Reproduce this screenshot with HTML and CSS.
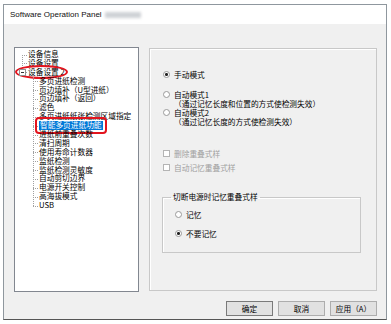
FILE: index.html
```html
<!DOCTYPE html>
<html lang="zh-CN">
<head>
  <meta charset="UTF-8">
  <title>Software Operation Panel</title>
  <link rel="stylesheet" href="styles.css">
</head>
<body>
  <div class="window">
    <div class="titlebar">
      <span class="title">Software Operation Panel</span>
      <span class="model"></span>
    </div>

    <div class="content">
      <div class="main">
        <!-- Settings tree -->
        <div class="tree">
          <div class="root">
            <div class="node">设备信息</div>
            <div class="node">设备设置</div>
            <div class="node"><span class="toggle"></span>设备设置 2<span class="mark ellipse"></span></div>
          </div>
          <div class="children">
            <div class="node">多页进纸检测</div>
            <div class="node">页边填补（U型进纸）</div>
            <div class="node">页边填补（返回）</div>
            <div class="node">滤色</div>
            <div class="node">多页进纸纸张检测区域指定</div>
            <div class="node"><span class="selected">智能多页进纸功能</span><span class="mark box"></span></div>
            <div class="node">进纸前重叠次数</div>
            <div class="node">清扫周期</div>
            <div class="node">使用寿命计数器</div>
            <div class="node">监纸检测</div>
            <div class="node">监纸检测灵敏度</div>
            <div class="node">自动剪切边界</div>
            <div class="node">电源开关控制</div>
            <div class="node">高海拔模式</div>
            <div class="node">USB</div>
          </div>
        </div>

        <!-- Options -->
        <div class="panel">
          <div class="opt"><span class="radio checked"></span><span>手动模式</span></div>
          <div class="opt auto1"><span class="radio"></span><span>自动模式1<br>（通过记忆长度和位置的方式使检测失效）</span></div>
          <div class="opt"><span class="radio"></span><span>自动模式2<br>（通过记忆长度的方式使检测失效）</span></div>
          <div class="opt disabled first-check"><span class="check"></span><span>删除重叠式样</span></div>
          <div class="opt disabled second-check"><span class="check"></span><span>自动记忆重叠式样</span></div>

          <fieldset class="group">
            <legend>切断电源时记忆重叠式样</legend>
            <div class="opt memo"><span class="radio"></span><span>记忆</span></div>
            <div class="opt no-memo"><span class="radio checked"></span><span>不要记忆</span></div>
          </fieldset>
        </div>
      </div>

      <div class="buttons">
        <button class="btn default">确定</button>
        <button class="btn">取消</button>
        <button class="btn">应用（A）</button>
      </div>
    </div>
  </div>
</body>
</html>
```

FILE: styles.css
```css
body {
  margin: 0;
  background: #fff;
  font-family: "Noto Sans CJK SC", "Liberation Sans", sans-serif;
  font-size: 7.7px;
  color: #000;
}

.window {
  width: 382px;
  height: 314px;
  margin: 4px 0 0 3px;
  border: 1px solid #8f979e;
  border-bottom-color: #555;
  background: #f0f0f0;
  display: flex;
  flex-direction: column;
}

.titlebar {
  height: 19px;
  background: #fff;
  display: flex;
  align-items: center;
  gap: 3px;
  padding-left: 6px;
}

.title {
  font-family: "Liberation Sans", sans-serif;
  font-size: 8px;
  color: #111;
}

.model {
  display: inline-block;
  width: 36px;
  height: 6px;
  background: #cfd2d6;
  filter: blur(1.5px);
}

.content {
  padding: 23px 9px 0 10px;
}

.main {
  display: flex;
  gap: 10px;
}

/* Tree view */
.tree {
  width: 123px;
  height: 241px;
  padding-top: 2px;
  border: 1px solid #828790;
  background: #fff;
}

.root,
.children {
  position: relative;
}

.node {
  position: relative;
  height: 8.9px;
  line-height: 8.9px;
  padding-left: 13px;
  white-space: nowrap;
}

.root::before {
  content: "";
  position: absolute;
  left: 7px;
  top: 4.5px;
  height: 17.8px;
  border-left: 1px dotted #a0a0a0;
}

.root .node::before {
  content: "";
  position: absolute;
  left: 7px;
  top: 4.5px;
  width: 5px;
  border-top: 1px dotted #a0a0a0;
}

.toggle {
  position: absolute;
  left: 4px;
  top: 1px;
  width: 7px;
  height: 7px;
  box-sizing: border-box;
  border: 1px solid #919191;
  background: #fff;
  z-index: 1;
}

.toggle::after {
  content: "";
  position: absolute;
  left: 1px;
  top: 2px;
  width: 3px;
  border-top: 1px solid #333;
}

.children::before {
  content: "";
  position: absolute;
  left: 18px;
  top: 0;
  bottom: 4.5px;
  border-left: 1px dotted #a0a0a0;
}

.children .node {
  padding-left: 24px;
}

.children .node::before {
  content: "";
  position: absolute;
  left: 18px;
  top: 4.5px;
  width: 5px;
  border-top: 1px dotted #a0a0a0;
}

.selected {
  display: inline-block;
  padding: 0 1px;
  background: #0078d7;
  color: #fff;
}

/* Red annotation marks */
.mark {
  position: absolute;
  box-sizing: border-box;
  border: 2px solid #e3141e;
  pointer-events: none;
}

.mark.ellipse {
  left: 0;
  top: -3px;
  width: 53px;
  height: 14px;
  border-radius: 26px / 7px;
}

.mark.box {
  left: 20px;
  top: -4px;
  width: 72px;
  height: 17px;
  border-radius: 4px;
}

/* Options panel */
.panel {
  flex: 1;
  height: 243px;
  box-sizing: border-box;
  margin-top: 1px;
  padding: 21.4px 0 0 13px;
  border: 1px solid #c8c8c8;
  box-shadow: inset 1px 1px #fff;
}

.opt {
  display: flex;
  align-items: flex-start;
  gap: 4px;
  line-height: 9.2px;
}

.opt.auto1 { margin-top: 10px; }
.opt.first-check { margin-top: 23px; }
.opt.second-check { margin-top: 4.8px; }

.opt.disabled {
  color: #a0a0a0;
}

.radio,
.check {
  flex: none;
  width: 7px;
  height: 7px;
  margin-top: 1px;
  box-sizing: border-box;
  border: 1px solid #9a9a9a;
  background: #fff;
}

.radio {
  border-radius: 50%;
}

.radio.checked {
  background: radial-gradient(circle, #222 1.2px, #fff 1.8px);
}

.check {
  border-color: #b4b4b4;
}

.group {
  width: 199px;
  box-sizing: border-box;
  margin: 19.8px 0 0 -1px;
  padding: 0 0 13.4px 8px;
  border: 1px solid #c8c8c8;
  box-shadow: inset 1px 1px #fff;
}

.group legend {
  padding: 0 2px;
  line-height: 9.2px;
}

.group .opt {
  margin-left: 4px;
}

.opt.memo { margin-top: 8.8px; }
.opt.no-memo { margin-top: 9.8px; }

/* Dialog buttons */
.buttons {
  display: flex;
  justify-content: flex-end;
  gap: 5px;
  margin-top: 9px;
}

.btn {
  width: 47px;
  height: 15px;
  padding: 0;
  border: 1px solid #adadad;
  background: #e1e1e1;
  font-family: "Noto Sans CJK SC", sans-serif;
  font-size: 7.7px;
  color: #000;
}

.btn.default {
  border-color: #7a7a7a;
}
```
